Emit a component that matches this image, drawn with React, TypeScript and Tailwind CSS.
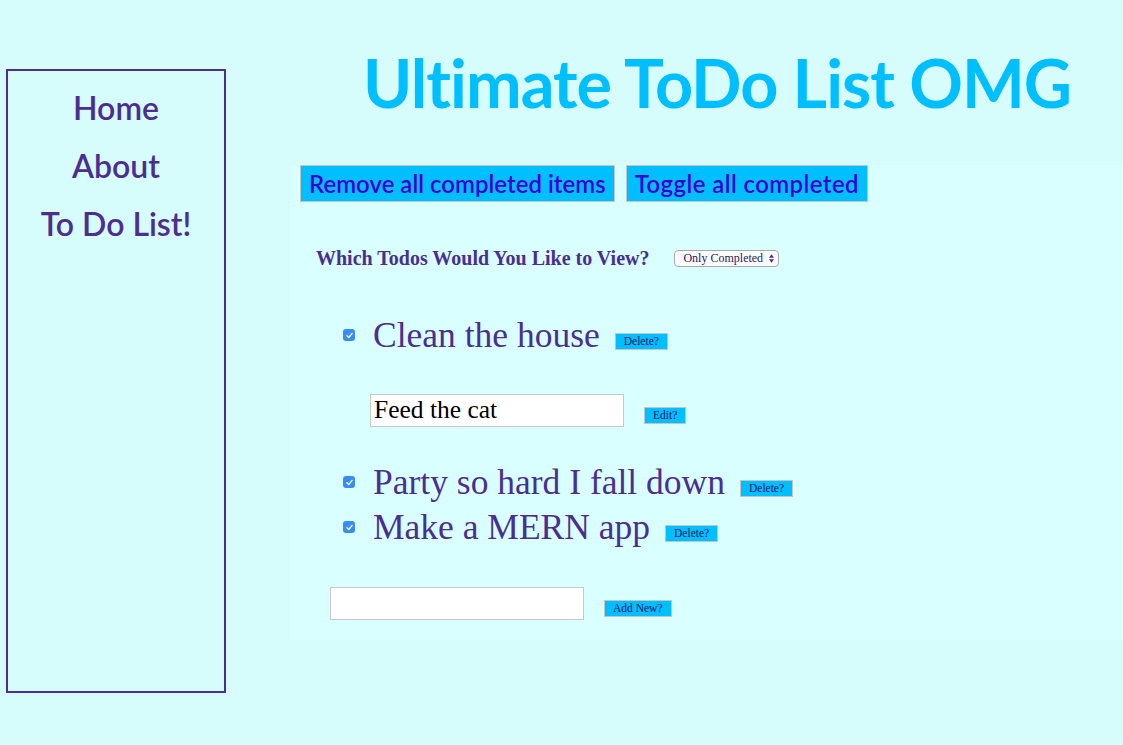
import type { ReactNode } from 'react';

const futura = { fontFamily: 'Lato, "Open Sans", sans-serif' };
const palatino = { fontFamily: '"Liberation Serif", "DejaVu Serif", serif' };

function SmallButton({ children }: { children: ReactNode }) {
  return (
    <button
      className="h-[17px] border border-[#c4c4c4] bg-[#00bfff] px-[8px] text-[11.5px] leading-none text-[#1c1060]"
      style={{ fontFamily: '"Liberation Serif", serif' }}
    >
      {children}
    </button>
  );
}

function Checkbox() {
  return (
    <span className="grid h-[12px] w-[12px] place-items-center rounded-[3px] bg-[#3a8cf5]">
      <svg viewBox="0 0 12 12" className="h-[9px] w-[9px]">
        <path d="M2.5 6.3 L5 8.6 L9.5 3.2" fill="none" stroke="white" strokeWidth="1.8" strokeLinecap="round" strokeLinejoin="round" />
      </svg>
    </span>
  );
}

function TodoRow({ text }: { text: string }) {
  return (
    <div className="flex items-center">
      <Checkbox />
      <span
        className="ml-[18px] text-[35.5px] leading-[44px] text-[#4b2e8f]"
        style={palatino}
      >
        {text}
      </span>
      <span className="ml-[15px] mt-[8px]">
        <SmallButton>Delete?</SmallButton>
      </span>
    </div>
  );
}

export default function App() {
  return (
    <div className="flex min-h-[745px] bg-[#d6fcfc]">
      <aside
        className="ml-[6px] mt-[69px] flex h-[624px] w-[220px] flex-col items-center border-2 border-[#4b2e8f] pt-[8px] text-[32px] font-semibold leading-[58px] text-[#4b2e8f]"
        style={futura}
      >
        <a>Home</a>
        <a>About</a>
        <a>To Do List!</a>
      </aside>

      <main className="ml-[64px] flex-1">
        <h1
          className="ml-[73px] mt-[37px] whitespace-nowrap text-[66.5px] font-bold leading-[90px] tracking-[-1px] text-[#00bfff]"
          style={futura}
        >
          Ultimate ToDo List OMG
        </h1>

        <section className="mt-[38px] h-[475px] bg-[#d9ffff] pl-[10px]">
          <div className="flex gap-[11px]" style={futura}>
            <button className="h-[37px] border border-[#c4c4c4] bg-[#00bfff] px-[8px] text-[24px] font-semibold text-[#3f00d4]">
              Remove all completed items
            </button>
            <button className="h-[37px] border border-[#c4c4c4] bg-[#00bfff] px-[8px] text-[24px] font-semibold tracking-[0.4px] text-[#3f00d4]">
              Toggle all completed
            </button>
          </div>

          <div className="ml-[16px] mt-[41px] flex items-center">
            <span className="text-[20px] font-bold text-[#4b2e8f]" style={palatino}>
              Which Todos Would You Like to View?
            </span>
            <span
              className="ml-[25px] flex h-[17px] w-[105px] items-center justify-between rounded-[4px] border border-[#a9a9a9] bg-[#fafafa] pl-[8px] pr-[4px] text-[12px] text-[#2a1a60]"
              style={{ fontFamily: '"Liberation Serif", serif' }}
            >
              Only Completed
              <svg viewBox="0 0 6 10" className="h-[9px] w-[5px]">
                <path d="M3 0 L6 4 H0 Z M3 10 L6 6 H0 Z" fill="#4b2e8f" />
              </svg>
            </span>
          </div>

          <div className="ml-[43px] mt-[40px]">
            <TodoRow text="Clean the house" />
          </div>

          <div className="ml-[70px] mt-[37px] flex items-center">
            <div
              className="flex h-[33px] w-[254px] items-center border border-[#c8c8c8] bg-white pl-[3px] text-[25.5px] text-black"
              style={palatino}
            >
              Feed the cat
            </div>
            <span className="ml-[20px] mt-[4px]">
              <SmallButton>Edit?</SmallButton>
            </span>
          </div>

          <div className="ml-[43px] mt-[33px] flex flex-col gap-[1px]">
            <TodoRow text="Party so hard I fall down" />
            <TodoRow text="Make a MERN app" />
          </div>

          <div className="ml-[30px] mt-[38px] flex items-center">
            <div className="h-[33px] w-[254px] border border-[#c8c8c8] bg-white" />
            <span className="ml-[20px] mt-[5px]">
              <SmallButton>Add New?</SmallButton>
            </span>
          </div>
        </section>
      </main>
    </div>
  );
}
